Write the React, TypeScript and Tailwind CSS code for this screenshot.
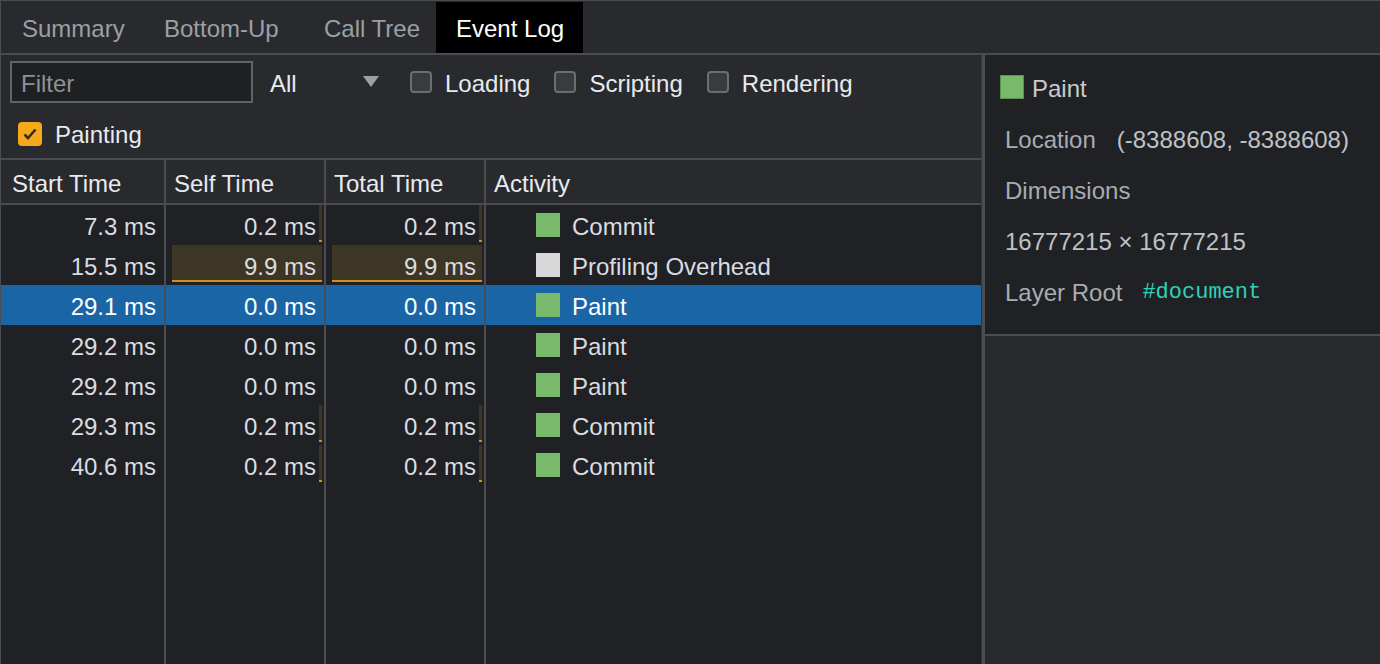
import React from "react";

type Row = {
  start: string;
  self: number;
  total: number;
  name: string;
  color: string;
  selected?: boolean;
};

const rows: Row[] = [
  { start: "7.3 ms", self: 0.2, total: 0.2, name: "Commit", color: "bg-[#78b96b]" },
  { start: "15.5 ms", self: 9.9, total: 9.9, name: "Profiling Overhead", color: "bg-[#d8d8d8]" },
  { start: "29.1 ms", self: 0.0, total: 0.0, name: "Paint", color: "bg-[#78b96b]", selected: true },
  { start: "29.2 ms", self: 0.0, total: 0.0, name: "Paint", color: "bg-[#78b96b]" },
  { start: "29.2 ms", self: 0.0, total: 0.0, name: "Paint", color: "bg-[#78b96b]" },
  { start: "29.3 ms", self: 0.2, total: 0.2, name: "Commit", color: "bg-[#78b96b]" },
  { start: "40.6 ms", self: 0.2, total: 0.2, name: "Commit", color: "bg-[#78b96b]" },
];

const tabs = [
  { label: "Summary", w: "w-[142px]" },
  { label: "Bottom-Up", w: "w-[160px]" },
  { label: "Call Tree", w: "w-[132px]" },
  { label: "Event Log", w: "w-[147px]" },
];

const MAX = 9.9;
const BAR_W = 150;

function Checkbox({ label, checked }: { label: string; checked?: boolean }) {
  return (
    <label className="flex items-center gap-[13px]">
      {checked ? (
        <span className="w-[24px] h-[24px] rounded-[4px] bg-[#f6a91d] flex items-center justify-center">
          <svg width="16" height="16" viewBox="0 0 16 16">
            <path d="M2.5 8.5 L6 12 L13.5 3.5" fill="none" stroke="#3b2b0a" strokeWidth="2.6" />
          </svg>
        </span>
      ) : (
        <span className="w-[22px] h-[22px] rounded-[4px] border-2 border-[#6b6e72] bg-[#3a3b3e]" />
      )}
      <span className="text-[#e8eaed] pt-[3px]">{label}</span>
    </label>
  );
}

function TimeCell({ value, selected }: { value: number; selected?: boolean }) {
  const w = Math.round((value / MAX) * BAR_W);
  return (
    <div className={`relative h-[40px] flex items-center justify-end pr-[8px] pt-[4px] ${selected ? "bg-[#1a65a6] text-white" : "text-[#dadce0]"}`}>
      {!selected && w > 0 && (
        <div
          className="absolute right-[2px] top-0 bottom-[3px] bg-[#3d3525] border-b-2 border-[#d08f1e]"
          style={{ width: w }}
        />
      )}
      <span className="relative">{value.toFixed(1)} ms</span>
    </div>
  );
}

export default function App() {
  return (
    <div className="w-[1380px] h-[664px] overflow-hidden bg-[#292a2d] border-t border-l border-[#4a4c50] flex flex-col text-[24px] leading-none font-['Liberation_Sans','Helvetica',Arial,sans-serif]">
      {/* tabs */}
      <div className="h-[54px] flex items-stretch pl-[1px] border-b-2 border-[#4a4c50] shrink-0">
        {tabs.map((t) => (
          <div
            key={t.label}
            className={`${t.w} pl-[20px] pt-[3px] flex items-center mt-[1px] ${t.label === "Event Log" ? "bg-black text-white" : "text-[#9aa0a6]"}`}
          >
            {t.label}
          </div>
        ))}
      </div>

      <div className="flex flex-1 min-h-0">
        {/* left panel */}
        <div className="w-[980px] flex flex-col">
          <div className="h-[105px] border-b-2 border-[#4a4c50] flex flex-col px-[9px] pt-[6px]">
            <div className="h-[42px] flex items-center">
              <div className="w-[243px] h-[42px] border-2 border-[#5f6266] bg-[#1f2023] flex items-center pl-[9px] pt-[3px] text-[#8e9297]">
                Filter
              </div>
              <div className="w-[109px] ml-[17px] flex items-center justify-between pt-[3px] text-[#e8eaed]">
                <span>All</span>
                <svg width="16" height="11" viewBox="0 0 16 11" className="-mt-[4px]">
                  <path d="M0 0 H16 L8 11 Z" fill="#9aa0a6" />
                </svg>
              </div>
              <div className="flex items-center gap-[24px] ml-[31px]">
                <Checkbox label="Loading" />
                <Checkbox label="Scripting" />
                <Checkbox label="Rendering" />
              </div>
            </div>
            <div className="h-[54px] flex items-center pl-[8px] pt-[7px]">
              <Checkbox label="Painting" checked />
            </div>
          </div>

          {/* table */}
          <div className="flex flex-1 min-h-0">
            <div className="w-[165px] border-r-2 border-[#4a4c50] flex flex-col">
              <div className="h-[45px] border-b-2 border-[#4a4c50] flex items-center pl-[11px] pt-[4px] text-[#e8eaed]">Start Time</div>
              <div className="flex-1 bg-[#202124]">
                {rows.map((r, i) => (
                  <div
                    key={i}
                    className={`h-[40px] flex items-center justify-end pr-[8px] pt-[4px] ${r.selected ? "bg-[#1a65a6] text-white" : "text-[#dadce0]"}`}
                  >
                    {r.start}
                  </div>
                ))}
              </div>
            </div>
            <div className="w-[160px] border-r-2 border-[#4a4c50] flex flex-col">
              <div className="h-[45px] border-b-2 border-[#4a4c50] flex items-center pl-[8px] pt-[4px] text-[#e8eaed]">Self Time</div>
              <div className="flex-1 bg-[#202124]">
                {rows.map((r, i) => (
                  <TimeCell key={i} value={r.self} selected={r.selected} />
                ))}
              </div>
            </div>
            <div className="w-[160px] border-r-2 border-[#4a4c50] flex flex-col">
              <div className="h-[45px] border-b-2 border-[#4a4c50] flex items-center pl-[8px] pt-[4px] text-[#e8eaed]">Total Time</div>
              <div className="flex-1 bg-[#202124]">
                {rows.map((r, i) => (
                  <TimeCell key={i} value={r.total} selected={r.selected} />
                ))}
              </div>
            </div>
            <div className="flex-1 flex flex-col">
              <div className="h-[45px] border-b-2 border-[#4a4c50] flex items-center pl-[8px] pt-[4px] text-[#e8eaed]">Activity</div>
              <div className="flex-1 bg-[#202124]">
                {rows.map((r, i) => (
                  <div
                    key={i}
                    className={`h-[40px] flex items-center pl-[50px] gap-[12px] ${r.selected ? "bg-[#1a65a6] text-white" : "text-[#dadce0]"}`}
                  >
                    <span className={`w-[24px] h-[24px] ${r.color}`} />
                    <span className="pt-[4px]">{r.name}</span>
                  </div>
                ))}
              </div>
            </div>
          </div>
        </div>

        {/* splitter */}
        <div className="w-[4px] bg-[#4a4c50] border-l border-[#34363a]" />

        {/* details */}
        <div className="flex-1 flex flex-col">
          <div className="h-[281px] bg-[#202124] border-b-2 border-[#4a4c50] flex flex-col pl-[15px] pt-[8px]">
            <div className="h-[48px] flex items-center gap-[8px]">
              <span className="w-[24px] h-[24px] bg-[#78b96b] border border-[#5d8f53]" />
              <span className="text-[#c8cbcf] pt-[3px]">Paint</span>
            </div>
            <div className="pl-[5px] pt-[2px] flex flex-col text-[#a9acb1]">
              <div className="h-[51px] flex items-center pt-[3px]">
                <span>Location</span>
                <span className="ml-[21px] text-[#bfc2c6]">(-8388608, -8388608)</span>
              </div>
              <div className="h-[51px] flex items-center pt-[3px]">Dimensions</div>
              <div className="h-[51px] flex items-center pt-[3px] text-[#bfc2c6]">16777215 × 16777215</div>
              <div className="h-[51px] flex items-center pt-[3px]">
                <span>Layer Root</span>
                <span className="ml-[20px] text-[22px] text-[#2fd0b8] font-['Liberation_Mono','DejaVu_Sans_Mono',monospace]">#document</span>
              </div>
            </div>
          </div>
          <div className="flex-1 bg-[#292a2d]" />
        </div>
      </div>
    </div>
  );
}
